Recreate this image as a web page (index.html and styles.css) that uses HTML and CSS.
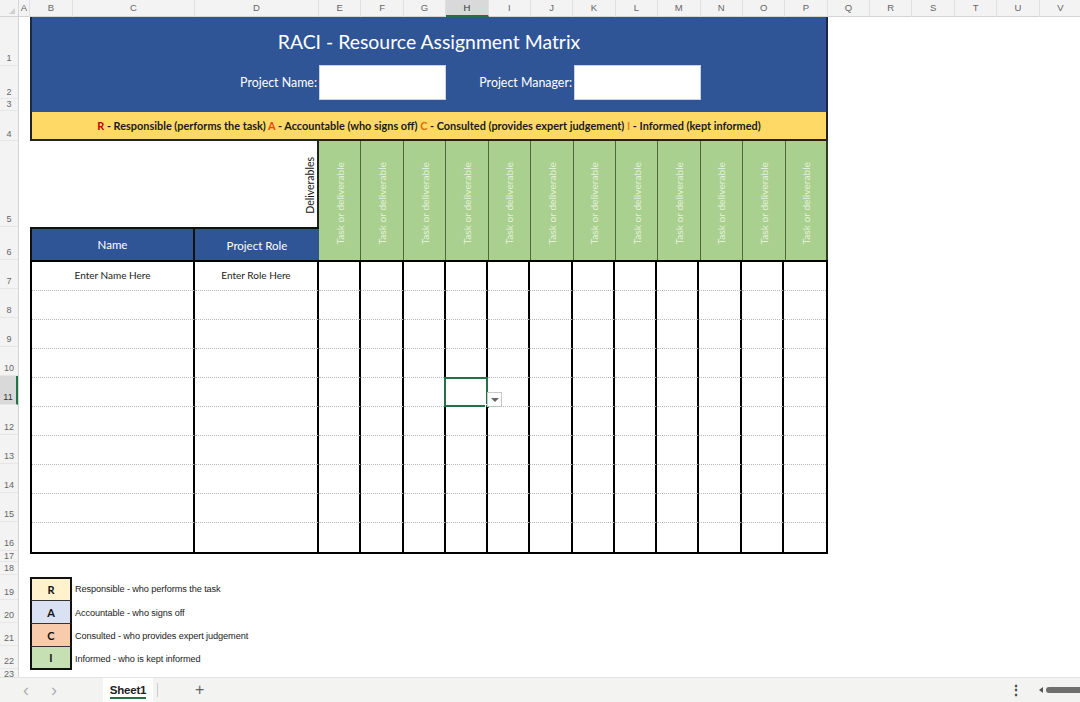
FILE: index.html
```html
<!DOCTYPE html>
<html>
<head>
<meta charset="utf-8">
<title>RACI - Resource Assignment Matrix</title>
<link rel="stylesheet" href="styles.css">
</head>
<body>
<div class="app">
  <div class="colhead">
    <div class="ch corner"><span class="tri"></span></div>
    <div class="ch">A</div><div class="ch">B</div><div class="ch">C</div><div class="ch">D</div>
    <div class="ch">E</div><div class="ch">F</div><div class="ch">G</div><div class="ch sel">H</div>
    <div class="ch">I</div><div class="ch">J</div><div class="ch">K</div><div class="ch">L</div>
    <div class="ch">M</div><div class="ch">N</div><div class="ch">O</div><div class="ch">P</div>
    <div class="ch">Q</div><div class="ch">R</div><div class="ch">S</div><div class="ch">T</div>
    <div class="ch">U</div><div class="ch">V</div>
  </div>
  <div class="main">
    <div class="rowhead">
      <div class="rh h1">1</div>
      <div class="rh h2">2</div>
      <div class="rh h3">3</div>
      <div class="rh h4">4</div>
      <div class="rh h5">5</div>
      <div class="rh h6">6</div>
      <div class="rh hb">7</div>
      <div class="rh hb">8</div>
      <div class="rh hb">9</div>
      <div class="rh hb">10</div>
      <div class="rh hb rsel">11</div>
      <div class="rh hb">12</div>
      <div class="rh hb">13</div>
      <div class="rh hb">14</div>
      <div class="rh hb">15</div>
      <div class="rh hb">16</div>
      <div class="rh h17">17</div>
      <div class="rh h18">18</div>
      <div class="rh h19">19</div>
      <div class="rh h20">20</div>
      <div class="rh h20">21</div>
      <div class="rh h20">22</div>
      <div class="rh h23">23</div>
    </div>
    <div class="sheet">
      <div class="banner">
        <div class="title">RACI - Resource Assignment Matrix</div>
        <div class="form">
          <div class="plabel">Project Name:</div>
          <div class="pbox"></div>
          <div class="plabel">Project Manager:</div>
          <div class="pbox"></div>
        </div>
      </div>
      <div class="keybar">
        <span class="kr">R</span> - Responsible (performs the task) <span class="ka">A</span> - Accountable (who signs off) <span class="kc">C</span> - Consulted (provides expert judgement) <span class="ki">I</span> - Informed (kept informed)
      </div>
      <div class="hdr">
        <div class="blank"></div>
        <div class="deliv"><span class="vt">Deliverables</span></div>
        <div class="task"><span class="vt">Task or deliverable</span></div>
        <div class="task"><span class="vt">Task or deliverable</span></div>
        <div class="task"><span class="vt">Task or deliverable</span></div>
        <div class="task"><span class="vt">Task or deliverable</span></div>
        <div class="task"><span class="vt">Task or deliverable</span></div>
        <div class="task"><span class="vt">Task or deliverable</span></div>
        <div class="task"><span class="vt">Task or deliverable</span></div>
        <div class="task"><span class="vt">Task or deliverable</span></div>
        <div class="task"><span class="vt">Task or deliverable</span></div>
        <div class="task"><span class="vt">Task or deliverable</span></div>
        <div class="task"><span class="vt">Task or deliverable</span></div>
        <div class="task last"><span class="vt">Task or deliverable</span></div>
        <div class="nameh">Name</div>
        <div class="roleh">Project Role</div>
      </div>
      <div class="body" id="body"></div>
      <div class="legend">
        <div class="lk lr">R</div><div class="lt">Responsible - who performs the task</div>
        <div class="lk la">A</div><div class="lt">Accountable - who signs off</div>
        <div class="lk lc">C</div><div class="lt">Consulted - who provides expert judgement</div>
        <div class="lk li">I</div><div class="lt">Informed - who is kept informed</div>
      </div>
    </div>
  </div>
  <div class="tabs">
    <span class="nav">&#x2039;</span>
    <span class="nav nav2">&#x203A;</span>
    <div class="tab"><span class="tabname">Sheet1</span></div>
    <span class="tabsep"></span>
    <span class="plus">+</span>
    <span class="spacer"></span>
    <span class="dots">&#x22EE;</span>
    <span class="sarrow"></span>
    <span class="thumb"></span>
  </div>
</div>
<script src="app.js"></script>
</body>
</html>
```
FILE: app.js
```js
(function () {
  var body = document.getElementById('body');
  for (var r = 0; r < 10; r++) {
    for (var c = 0; c < 14; c++) {
      var d = document.createElement('div');
      d.className = 'cell' + (c === 13 ? ' lastc' : '') + (r === 9 ? ' lastr' : '');
      if (r === 0 && c === 0) { d.textContent = 'Enter Name Here'; d.className += ' txt'; }
      if (r === 0 && c === 1) { d.textContent = 'Enter Role Here'; d.className += ' txt'; }
      if (r === 4 && c === 5) {
        d.className += ' active';
        var s = document.createElement('div'); s.className = 'selbox';
        var h = document.createElement('div'); h.className = 'handle';
        var b = document.createElement('div'); b.className = 'ddbtn';
        d.appendChild(s); d.appendChild(h); d.appendChild(b);
      }
      body.appendChild(d);
    }
  }
})();
```
FILE: styles.css
```css
* { box-sizing: border-box; }
html, body { margin: 0; padding: 0; }
body { width: 1080px; height: 702px; overflow: hidden; background: #fff; font-family: "Lato", "Liberation Sans", sans-serif; }
.app { width: 1080px; height: 702px; display: flex; flex-direction: column; }

.colhead { display: grid; grid-template-columns: 19px 11px 43px 122px 124px repeat(18, 42.4px); height: 17px; background: #f3f3f3; border-bottom: 1px solid #d4d4d4; flex: none; }
.ch { font: 9.5px "Liberation Sans", sans-serif; color: #666; text-align: center; line-height: 16px; border-right: 1px solid #e0e0e0; }
.ch.sel { background: #d9d9d9; border-bottom: 2px solid #217346; color: #333; line-height: 15px; }
.corner { position: relative; border-right: 1px solid #d4d4d4; }
.tri { position: absolute; right: 3px; bottom: 3px; width: 0; height: 0; border-left: 6px solid transparent; border-bottom: 6px solid #d0d0d0; }

.main { display: flex; height: 660px; overflow: hidden; flex: none; }
.rowhead { width: 19px; flex: none; background: #f3f3f3; border-right: 1px solid #d4d4d4; }
.rh { display: flex; align-items: flex-end; justify-content: center; font: 9px "Liberation Sans", sans-serif; color: #666; padding-bottom: 1px; border-bottom: 1px solid #e6e6e6; line-height: 10px; }
.h1 { height: 49px; padding-bottom: 2px; }
.h2 { height: 33px; }
.h3 { height: 12px; }
.h4 { height: 30px; }
.h5 { height: 86px; padding-bottom: 2px; }
.h6 { height: 33px; padding-bottom: 2px; }
.hb { height: 29.1px; padding-bottom: 2px; }
.h17 { height: 11px; padding-bottom: 0; }
.h18 { height: 13px; }
.h19 { height: 25px; padding-bottom: 2px; }
.h20 { height: 23px; padding-bottom: 2px; }
.h23 { height: 12px; }
.rsel { background: #d9d9d9; border-right: 2px solid #217346; color: #333; }

.sheet { flex: 1; padding-left: 11px; display: flex; flex-direction: column; }

.banner { width: 798px; height: 95px; flex: none; background: #2F5597; border-left: 2px solid #1b2a44; border-right: 2px solid #1b2a44; display: flex; flex-direction: column; align-items: center; }
.title { color: #fff; font-size: 19.4px; line-height: 24px; margin-top: 13px; }
.form { display: grid; grid-template-columns: 287px 127px 128px 127px; align-items: center; margin-top: 11px; width: 100%; }
.plabel { color: #fff; font-size: 12.4px; text-align: right; padding-right: 2px; }
.pbox { height: 35px; background: #fff; border: 1px solid #c9d3e6; }

.keybar { width: 798px; height: 29px; flex: none; background: #FFD966; border: 2px solid #222; border-top: none; font-weight: bold; font-size: 10.9px; color: #1a1a1a; text-align: center; line-height: 27px; }
.kr { color: #C00000; }
.ka { color: #E8461C; }
.kc { color: #E36C09; }
.ki { color: #ED7D31; }

.hdr { width: 798px; height: 119px; flex: none; display: grid; grid-template-columns: 165px 124px repeat(12, 1fr); grid-template-rows: 86px 33px; }
.blank { grid-column: 1; grid-row: 1; }
.deliv { grid-column: 2; grid-row: 1; border-right: 2px solid #222; display: flex; justify-content: flex-end; align-items: flex-end; padding: 0 1px 13px 0; }
.vt { writing-mode: vertical-rl; transform: rotate(180deg); white-space: nowrap; }
.deliv .vt { font-size: 10.5px; color: #111; }
.task { grid-row: 1 / 3; background: #A9D08E; border-right: 1px solid #4a6b35; display: flex; justify-content: center; align-items: center; padding-top: 5px; }
.task.last { border-right: 2px solid #2d3f22; }
.task .vt { font-size: 10.2px; color: #E4F0DA; }
.nameh, .roleh { grid-row: 2; background: #2F5597; color: #fff; font-size: 11.5px; display: flex; align-items: center; justify-content: center; border-top: 2px solid #111; }
.nameh { grid-column: 1; border-left: 2px solid #111; border-right: 2px solid #111; }
.roleh { grid-column: 2; padding-top: 2px; }

.body { width: 798px; flex: none; display: grid; grid-template-columns: 163px 124px repeat(12, 1fr); grid-template-rows: repeat(10, 29px); border: 2px solid #000; }
.cell { border-right: 2px solid #000; border-bottom: 1px dotted #b8b8b8; position: relative; }
.cell.lastc { border-right: none; }
.cell.lastr { border-bottom: none; }
.cell.txt { font-size: 10px; color: #222; text-align: center; padding-top: 7px; }
.selbox { position: absolute; left: -2px; top: -1px; right: -2px; bottom: -1px; border: 2px solid #217346; }
.handle { position: absolute; right: -4px; bottom: -3px; width: 5px; height: 5px; background: #217346; border: 1px solid #fff; }
.ddbtn { position: absolute; left: calc(100% + 1px); top: 14px; width: 15px; height: 15px; background: #fff; border: 1px solid #c8c8c8; }
.ddbtn::after { content: ""; position: absolute; left: 3px; top: 5px; border-left: 4px solid transparent; border-right: 4px solid transparent; border-top: 4px solid #666; }

.legend { margin-top: 23px; display: grid; grid-template-columns: 42px auto; grid-template-rows: 24px 23px 23px 23px; width: 300px; flex: none; }
.lk { border-left: 2px solid #111; border-right: 2px solid #111; border-bottom: 1px solid #333; display: flex; align-items: center; justify-content: center; font-weight: bold; font-size: 11px; color: #111; font-family: "Lato", sans-serif; }
.lr { background: #FFF2CC; border-top: 2px solid #111; }
.la { background: #D9E1F2; }
.lc { background: #F8CBAD; }
.li { background: #C6E0B4; border-bottom: 2px solid #111; }
.lt { font: 9.2px "Liberation Sans", sans-serif; color: #222; padding-left: 3px; display: flex; align-items: center; letter-spacing: -0.1px; }

.tabs { height: 25px; flex: none; background: #f3f3f1; border-top: 1px solid #e3e3e3; display: flex; align-items: center; font-family: "Liberation Sans", sans-serif; }
.nav { color: #b0b0b0; font-size: 18px; width: 10px; margin-left: 23px; line-height: 20px; }
.nav2 { margin-left: 18px; }
.tab { margin-left: 42px; width: 50px; height: 24px; background: #fff; display: flex; justify-content: center; align-items: center; }
.tabname { font-weight: bold; font-size: 11.5px; color: #222; border-bottom: 2px solid #217346; padding-bottom: 1px; margin-top: 2px; letter-spacing: -0.2px; }
.tabsep { width: 1px; height: 14px; background: #ccc; margin-left: 4px; }
.plus { color: #666; font-size: 16px; margin-left: 37px; }
.spacer { flex: 1; }
.dots { color: #444; font-size: 14px; font-weight: bold; margin-right: 16px; }
.sarrow { width: 0; height: 0; border-top: 3px solid transparent; border-bottom: 3px solid transparent; border-right: 4px solid #555; margin-right: 3px; }
.thumb { width: 34px; height: 6px; background: #6e6e6e; border-radius: 3px 0 0 3px; }
```
